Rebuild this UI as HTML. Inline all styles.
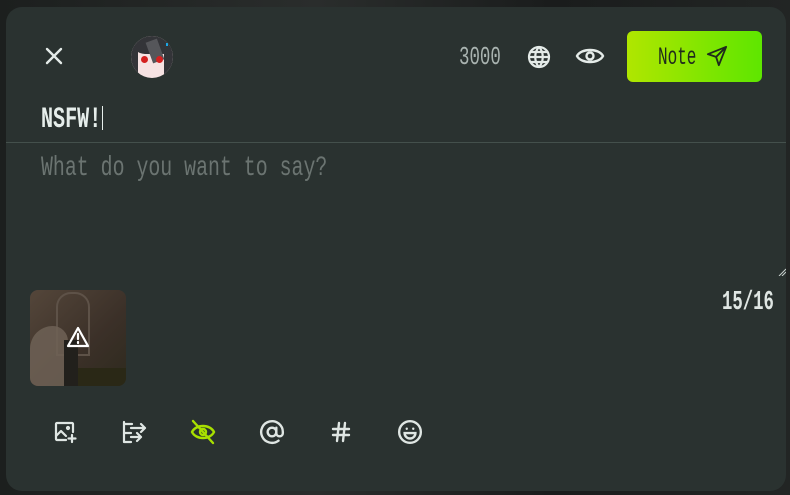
<!DOCTYPE html>
<html><head><meta charset="utf-8"><style>
html,body{margin:0;padding:0;width:790px;height:495px;overflow:hidden;background:#161918;}
body{position:relative;font-family:"Liberation Mono",monospace;}
.bgblur{position:absolute;left:0;top:0;width:790px;height:495px;background:linear-gradient(90deg,#1c1f1e,#2a2d2c 40%,#1a1c1c 70%,#222524);}
.panel{position:absolute;left:6px;top:7px;width:780px;height:484px;background:#2a3230;border-radius:16px;}
.t{position:absolute;color:#dfe6e3;white-space:nowrap;line-height:1;transform-origin:left top;}
svg{position:absolute;}
.btn{position:absolute;left:627px;top:31px;width:135px;height:51px;border-radius:6px;background:linear-gradient(90deg,#b0e600,#5ee600);}
</style></head><body>
<div class="bgblur"></div>
<div class="panel"></div>
<svg style="left:44px;top:46px" width="20" height="20" viewBox="0 0 20 20"><path d="M3 3L17 17M17 3L3 17" stroke="#e4ebe8" stroke-width="2.4" stroke-linecap="round"/></svg>
<div style="position:absolute;left:131px;top:36px;width:42px;height:42px;border-radius:50%;overflow:hidden;background:#f6e2e2;">
<div style="position:absolute;left:0;top:0;width:42px;height:18px;background:#333438;border-radius:0 0 10px 14px;"></div>
<div style="position:absolute;left:18px;top:4px;width:12px;height:22px;background:#55565a;transform:rotate(-20deg);"></div>
<div style="position:absolute;left:0;top:10px;width:7px;height:32px;background:#333438;"></div>
<div style="position:absolute;right:0;top:10px;width:9px;height:32px;background:#333438;"></div>
<div style="position:absolute;left:10px;top:20px;width:7px;height:7px;border-radius:50%;background:#d42020;"></div>
<div style="position:absolute;left:25px;top:20px;width:7px;height:7px;border-radius:50%;background:#d42020;"></div>
<div style="position:absolute;left:35px;top:7px;width:2px;height:3px;background:#1aa6e6;"></div>
</div>
<div class="t" style="left:459px;top:44px;font-size:26px;color:#a9b3b0;transform:scaleX(0.67);">3000</div>
<svg style="left:527px;top:45px" width="24" height="24" viewBox="0 0 24 24" fill="none" stroke="#e4ebe8" stroke-width="2.2"><circle cx="12" cy="12" r="10"/><path d="M2 12h20M3.5 7h17M3.5 17h17M12 2c-5 5-5 15 0 20M12 2c5 5 5 15 0 20"/></svg>
<svg style="left:575px;top:44px" width="30" height="24" viewBox="0 0 30 24" fill="none" stroke="#e4ebe8" stroke-width="2.4"><path d="M2 12C6 4 24 4 28 12C24 20 6 20 2 12Z"/><circle cx="15" cy="12" r="3.5"/></svg>
<div class="btn"></div>
<div class="t" style="left:658px;top:45px;font-size:25px;color:#1f2a1c;transform:scaleX(0.64);">Note</div>
<svg style="left:706px;top:45px" width="22" height="22" viewBox="0 0 24 24" fill="none" stroke="#1f2a1c" stroke-width="2" stroke-linejoin="round"><path d="M22 2L2 10l9 3 3 9z M22 2L11 13"/></svg>
<div class="t" style="left:41px;top:105px;font-size:30px;font-weight:bold;color:#e6eeeb;transform:scaleX(0.67);">NSFW!</div>
<div style="position:absolute;left:102px;top:106px;width:1px;height:24px;background:#e6eeeb;"></div>
<div style="position:absolute;left:6px;top:142px;width:780px;height:1px;background:#44504c;"></div>
<div class="t" style="left:41px;top:155px;font-size:28px;color:#6b7471;transform:scaleX(0.71);">What do you want to say?</div>
<svg style="left:778px;top:268px" width="8" height="8" viewBox="0 0 8 8" stroke="#c8d0cd" stroke-width="1"><path d="M1 8L8 1M4 8L8 4"/></svg>
<div class="t" style="left:722px;top:290px;font-size:27px;font-weight:bold;color:#dfe6e3;transform:scaleX(0.64);">15/16</div>
<div style="position:absolute;left:30px;top:290px;width:96px;height:96px;border-radius:8px;overflow:hidden;background:linear-gradient(135deg,#54463a,#3b3028 60%,#2e2a1e);">
<div style="position:absolute;left:26px;top:2px;width:30px;height:60px;border:2px solid #5e5248;border-radius:15px 15px 0 0;"></div>
<div style="position:absolute;left:0;top:36px;width:38px;height:60px;background:#6e6256;border-radius:24px 16px 0 0;opacity:.85"></div>
<div style="position:absolute;left:34px;top:50px;width:14px;height:46px;background:#22201c;"></div>
<div style="position:absolute;left:48px;top:78px;width:48px;height:18px;background:#2a2816;"></div>
</div>
<svg style="left:66px;top:326px" width="24" height="22" viewBox="0 0 24 22" fill="none" stroke="#fff" stroke-width="2.2" stroke-linejoin="round"><path d="M12 2L22 20H2Z"/><path d="M12 8v5M12 16v1" stroke-linecap="round"/></svg>
<svg style="left:53px;top:420px" width="24" height="24" viewBox="0 0 24 24" fill="none" stroke="#dfe6e3" stroke-width="2.2" stroke-linecap="round" stroke-linejoin="round"><path d="M13 20H4a1 1 0 0 1-1-1V4a1 1 0 0 1 1-1h15a1 1 0 0 1 1 1v8"/><path d="M3 16l5-5 5 5"/><circle cx="15" cy="8" r="1"/><path d="M19 15v7M15.5 18.5h7"/></svg>
<svg style="left:121px;top:419px" width="26" height="26" viewBox="0 0 26 26" fill="none" stroke="#dfe6e3" stroke-width="2.2" stroke-linecap="round" stroke-linejoin="round"><path d="M3 3v20M3 5h8M3 14h7M3 23h7M10 9h14M20 5l4 4-4 4M10 18h10M16 14l4 4-4 4"/></svg>
<svg style="left:189px;top:419px" width="28" height="26" viewBox="0 0 28 26" fill="none" stroke="#a8e000" stroke-width="2.4" stroke-linecap="round"><path d="M3 13C7 5 21 5 25 13C21 21 7 21 3 13Z"/><circle cx="14" cy="13" r="3"/><path d="M4 2L24 24"/></svg>
<svg style="left:259px;top:419px" width="26" height="26" viewBox="0 0 24 24" fill="none" stroke="#dfe6e3" stroke-width="2.2" stroke-linecap="round"><circle cx="12" cy="12" r="4"/><path d="M16 8v5a3 3 0 0 0 6 0v-1a10 10 0 1 0-4 8"/></svg>
<svg style="left:329px;top:420px" width="24" height="24" viewBox="0 0 24 24" fill="none" stroke="#dfe6e3" stroke-width="2.4" stroke-linecap="round"><path d="M4 9h16M4 15h16M10 3L8 21M16 3l-2 18"/></svg>
<svg style="left:397px;top:419px" width="26" height="26" viewBox="0 0 24 24" fill="none" stroke="#dfe6e3" stroke-width="2.2" stroke-linecap="round"><circle cx="12" cy="12" r="10"/><path d="M9 9h.01M15 9h.01"/><path d="M7 13h10a5 5 0 0 1-10 0z"/></svg>
</body></html>
